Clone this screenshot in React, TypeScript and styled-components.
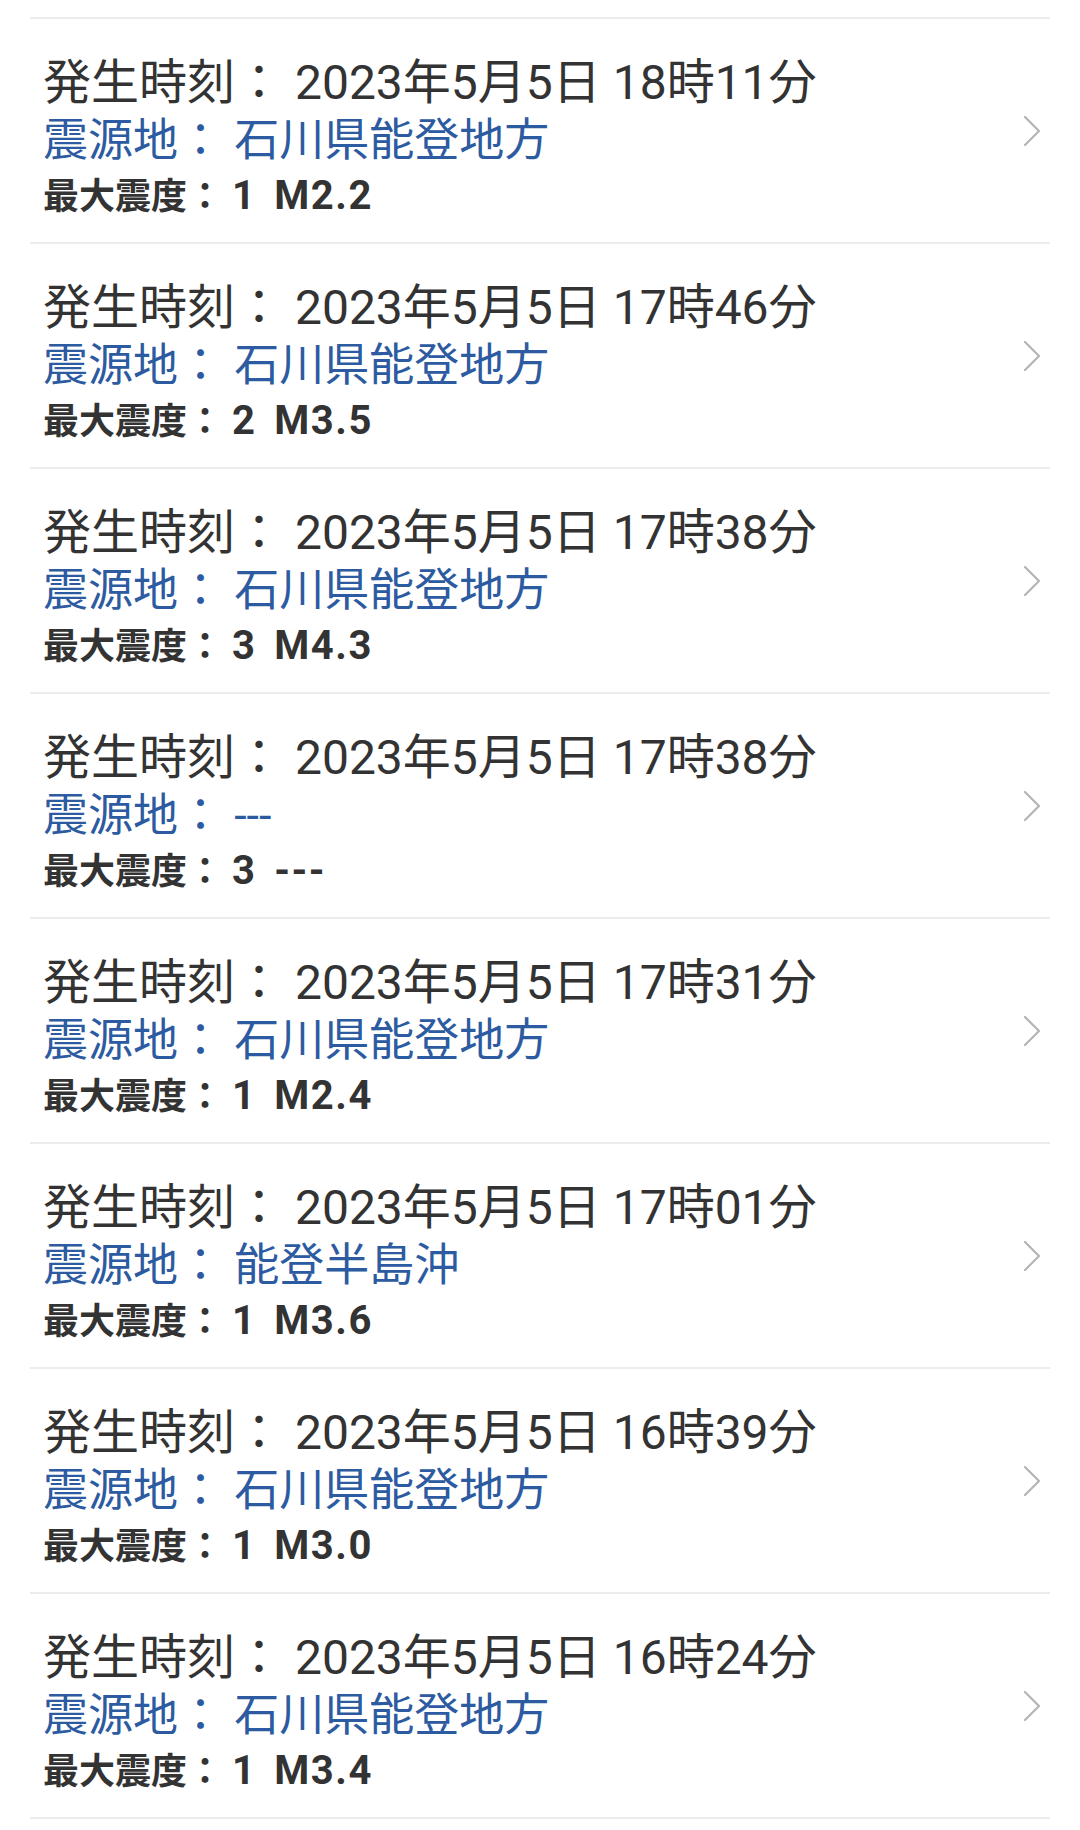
import React from "react";
import styled, { createGlobalStyle } from "styled-components";

interface IQuake {
  time: string;
  place: string;
  intensity: string;
  magnitude: string;
}

const quakes: IQuake[] = [
  { time: "2023年5月5日 18時11分", place: "石川県能登地方", intensity: "1", magnitude: "M2.2" },
  { time: "2023年5月5日 17時46分", place: "石川県能登地方", intensity: "2", magnitude: "M3.5" },
  { time: "2023年5月5日 17時38分", place: "石川県能登地方", intensity: "3", magnitude: "M4.3" },
  { time: "2023年5月5日 17時38分", place: "---", intensity: "3", magnitude: "---" },
  { time: "2023年5月5日 17時31分", place: "石川県能登地方", intensity: "1", magnitude: "M2.4" },
  { time: "2023年5月5日 17時01分", place: "能登半島沖", intensity: "1", magnitude: "M3.6" },
  { time: "2023年5月5日 16時39分", place: "石川県能登地方", intensity: "1", magnitude: "M3.0" },
  { time: "2023年5月5日 16時24分", place: "石川県能登地方", intensity: "1", magnitude: "M3.4" },
];

const Chevron = () => (
  <svg width="18" height="32" viewBox="0 0 18 32">
    <path
      d="M2 2 L16 16 L2 30"
      fill="none"
      stroke="#b4b4b4"
      strokeWidth="2.2"
      strokeLinecap="round"
      strokeLinejoin="round"
    />
  </svg>
);

const App = () => {
  return (
    <>
      <GlobalStyle />
      <List>
        {quakes.map((q, idx) => (
          <Item key={idx}>
            <Info>
              <TimeLine>発生時刻： {q.time}</TimeLine>
              <PlaceLine>震源地： {q.place}</PlaceLine>
              <ScaleLine>
                最大震度： <Value>{q.intensity}</Value>&nbsp;{" "}
                <Value>{q.magnitude}</Value>
              </ScaleLine>
            </Info>
            <Arrow>
              <Chevron />
            </Arrow>
          </Item>
        ))}
      </List>
    </>
  );
};

export default App;

const GlobalStyle = createGlobalStyle`
  body {
    margin: 0;
    background: #ffffff;
    font-family: Roboto, "Noto Sans CJK JP", sans-serif;
  }
`;

const List = styled.ul`
  list-style: none;
  margin: 0 30px;
  padding: 17px 0 0;
`;

const Item = styled.li`
  display: flex;
  align-items: flex-start;
  justify-content: space-between;
  height: 223px;
  padding: 0 13px;
  border-top: 2px solid #ececec;

  &:last-child {
    border-bottom: 2px solid #ececec;
  }
`;

const Info = styled.div`
  display: flex;
  flex-direction: column;
  padding-top: 35px;
`;

const TimeLine = styled.div`
  font-size: 48px;
  line-height: 58px;
  color: #333333;
`;

const PlaceLine = styled.div`
  font-size: 45px;
  line-height: 58px;
  color: #2d5ba1;
`;

const ScaleLine = styled.div`
  font-size: 36px;
  line-height: 52px;
  font-weight: 700;
  color: #333333;
`;

const Value = styled.span`
  font-size: 40px;
  letter-spacing: 1.5px;
`;

const Arrow = styled.div`
  align-self: center;
  display: flex;
  margin-right: -4px;
`;
